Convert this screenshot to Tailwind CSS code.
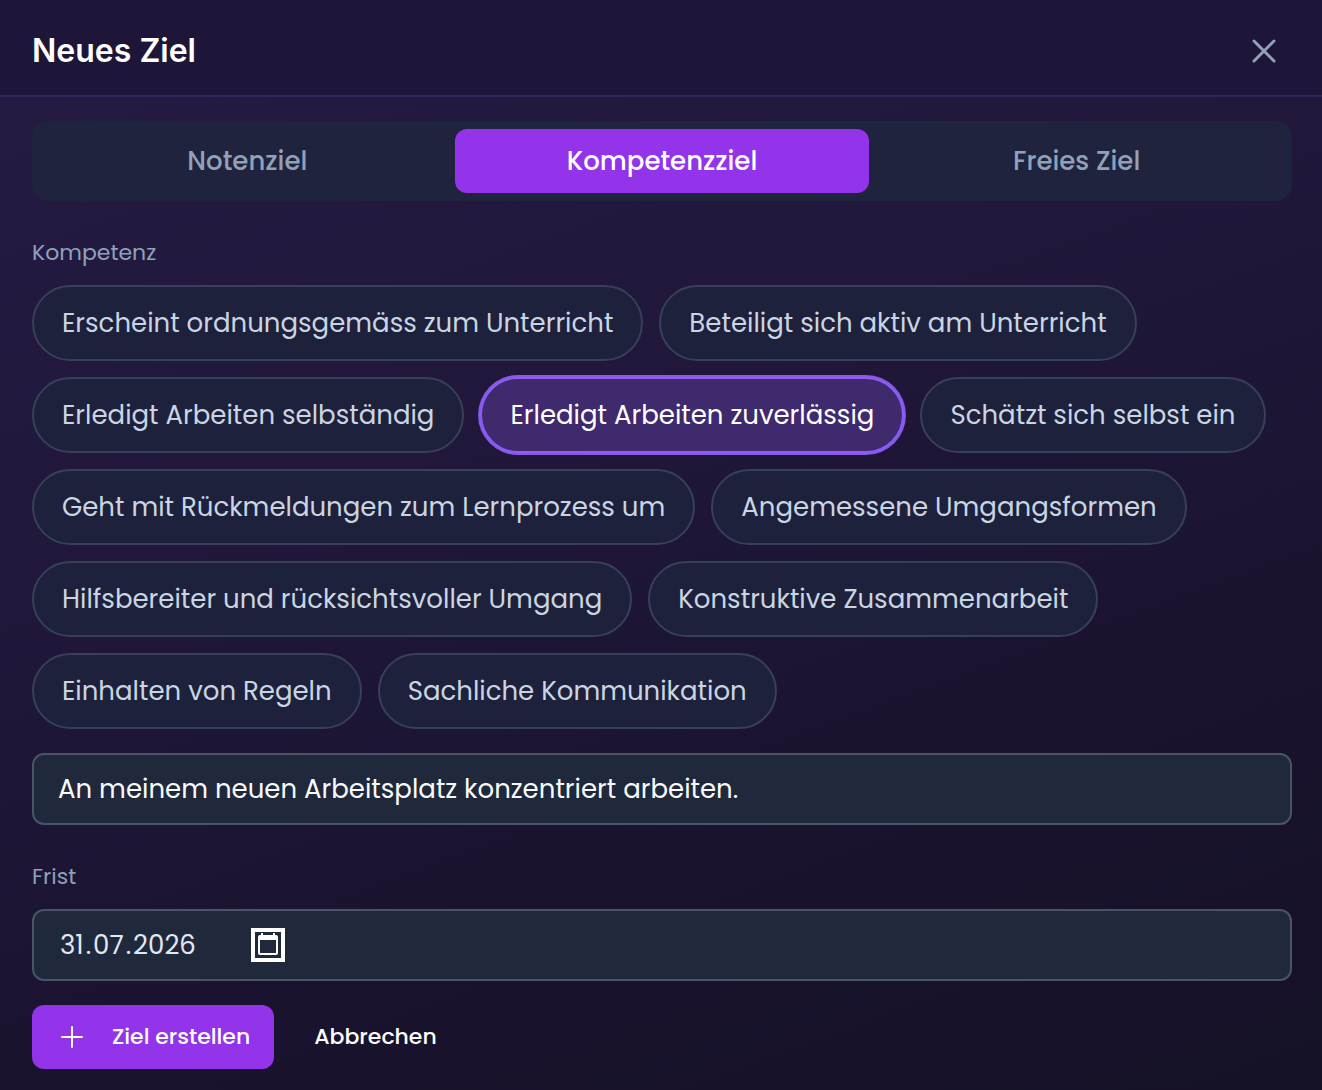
<!DOCTYPE html>
<html lang="de">

<head>
    <meta charset="UTF-8">
    <meta name="viewport" content="width=device-width, initial-scale=1.0">
    <title>Neues Ziel</title>
    <script src="https://cdn.jsdelivr.net/npm/@tailwindcss/browser@4"></script>
</head>

<body class="min-h-screen bg-linear-[160deg,#251b45,#20173a_40%,#1a132f_70%,#151126] font-[Poppins,Inter,sans-serif] text-white">

    <!-- Header -->
    <header class="flex items-center justify-between h-[97px] pl-8 pr-[34px] pt-1.5 bg-[#1e1638] border-b-2 border-[#2f2559]">
        <h1 class="font-[Inter,sans-serif] text-[32px] leading-10 font-semibold">Neues Ziel</h1>
        <button type="button" aria-label="Schliessen" class="p-1 text-slate-400">
            <svg class="size-10" viewBox="0 0 40 40" fill="none" stroke="currentColor" stroke-width="3" stroke-linecap="round">
                <path d="M10 10l20 20M30 10L10 30" />
            </svg>
        </button>
    </header>

    <form class="pl-8 pr-[30px] pt-6 pb-5">

        <!-- Tabs -->
        <div class="grid grid-cols-3 p-2 rounded-2xl bg-[#1f233d] text-[26px] font-medium text-slate-400">
            <button type="button" class="h-16 rounded-xl">Notenziel</button>
            <button type="button" class="h-16 rounded-xl bg-[#9333ea] text-white">Kompetenzziel</button>
            <button type="button" class="h-16 rounded-xl">Freies Ziel</button>
        </div>

        <!-- Kompetenz -->
        <h2 id="kompetenz" class="mt-8 mb-3 text-[22px] leading-10 text-slate-400">Kompetenz</h2>
        <div role="group" aria-labelledby="kompetenz" class="flex flex-wrap gap-4 text-[26px] text-slate-300">
            <button type="button" class="h-[76px] px-7 rounded-full border-2 border-[#383f5a] bg-[#1e213b]">Erscheint ordnungsgemäss zum Unterricht</button>
            <button type="button" class="h-[76px] px-7 rounded-full border-2 border-[#383f5a] bg-[#1e213b]">Beteiligt sich aktiv am Unterricht</button>
            <button type="button" class="h-[76px] px-7 rounded-full border-2 border-[#383f5a] bg-[#1e213b]">Erledigt Arbeiten selbständig</button>
            <button type="button" aria-pressed="true" class="h-[76px] px-7 rounded-full border-2 border-[#8b5cf6] ring-2 ring-[#8659e8] bg-[#402a6e] text-white">Erledigt Arbeiten zuverlässig</button>
            <button type="button" class="h-[76px] px-7 rounded-full border-2 border-[#383f5a] bg-[#1e213b]">Schätzt sich selbst ein</button>
            <button type="button" class="h-[76px] px-7 rounded-full border-2 border-[#383f5a] bg-[#1e213b]">Geht mit Rückmeldungen zum Lernprozess um</button>
            <button type="button" class="h-[76px] px-7 rounded-full border-2 border-[#383f5a] bg-[#1e213b]">Angemessene Umgangsformen</button>
            <button type="button" class="h-[76px] px-7 rounded-full border-2 border-[#383f5a] bg-[#1e213b]">Hilfsbereiter und rücksichtsvoller Umgang</button>
            <button type="button" class="h-[76px] px-7 rounded-full border-2 border-[#383f5a] bg-[#1e213b]">Konstruktive Zusammenarbeit</button>
            <button type="button" class="h-[76px] px-7 rounded-full border-2 border-[#383f5a] bg-[#1e213b]">Einhalten von Regeln</button>
            <button type="button" class="h-[76px] px-7 rounded-full border-2 border-[#383f5a] bg-[#1e213b]">Sachliche Kommunikation</button>
        </div>
        <input type="text" aria-label="Beschreibung" value="An meinem neuen Arbeitsplatz konzentriert arbeiten." class="block w-full h-[72px] mt-6 px-6 rounded-xl border-2 border-[#475569] bg-[#1f293b] text-[26px] text-slate-50">

        <!-- Frist -->
        <label for="tag" class="block mt-8 mb-3 text-[22px] leading-10 text-slate-400">Frist</label>
        <div class="flex items-center h-[72px] px-6 rounded-xl border-2 border-[#475569] bg-[#1f293b]">
            <div class="flex w-[193px] text-[26px] text-slate-200">
                <input type="text" id="tag" inputmode="numeric" value="31" class="field-sizing-content px-0.5">.
                <input type="text" aria-label="Monat" inputmode="numeric" value="07" class="field-sizing-content px-0.5">.
                <input type="text" aria-label="Jahr" inputmode="numeric" value="2026" class="field-sizing-content px-0.5">
            </div>
            <button type="button" aria-label="Kalender öffnen" class="size-[34px] border-4 border-white">
                <svg class="size-full" viewBox="0 0 26 26">
                    <path fill="#fff" fill-rule="evenodd" d="M6 1h2v2h10V1h2v2h1a2 2 0 0 1 2 2v16a2 2 0 0 1-2 2H5a2 2 0 0 1-2-2V5a2 2 0 0 1 2-2h1zM5 8v13h16V8z" />
                </svg>
            </button>
        </div>

        <!-- Aktionen -->
        <div class="flex gap-4 mt-6 text-[22px] leading-8 font-medium">
            <button type="submit" class="flex items-center gap-6 h-16 px-6 rounded-xl bg-[#9333ea]">
                <svg class="size-8" viewBox="0 0 32 32" fill="none" stroke="currentColor" stroke-width="2" stroke-linecap="round">
                    <path d="M6 16h20M16 6v20" />
                </svg>
                Ziel erstellen
            </button>
            <button type="button" class="h-16 px-6 rounded-xl">Abbrechen</button>
        </div>
    </form>

</body>

</html>
